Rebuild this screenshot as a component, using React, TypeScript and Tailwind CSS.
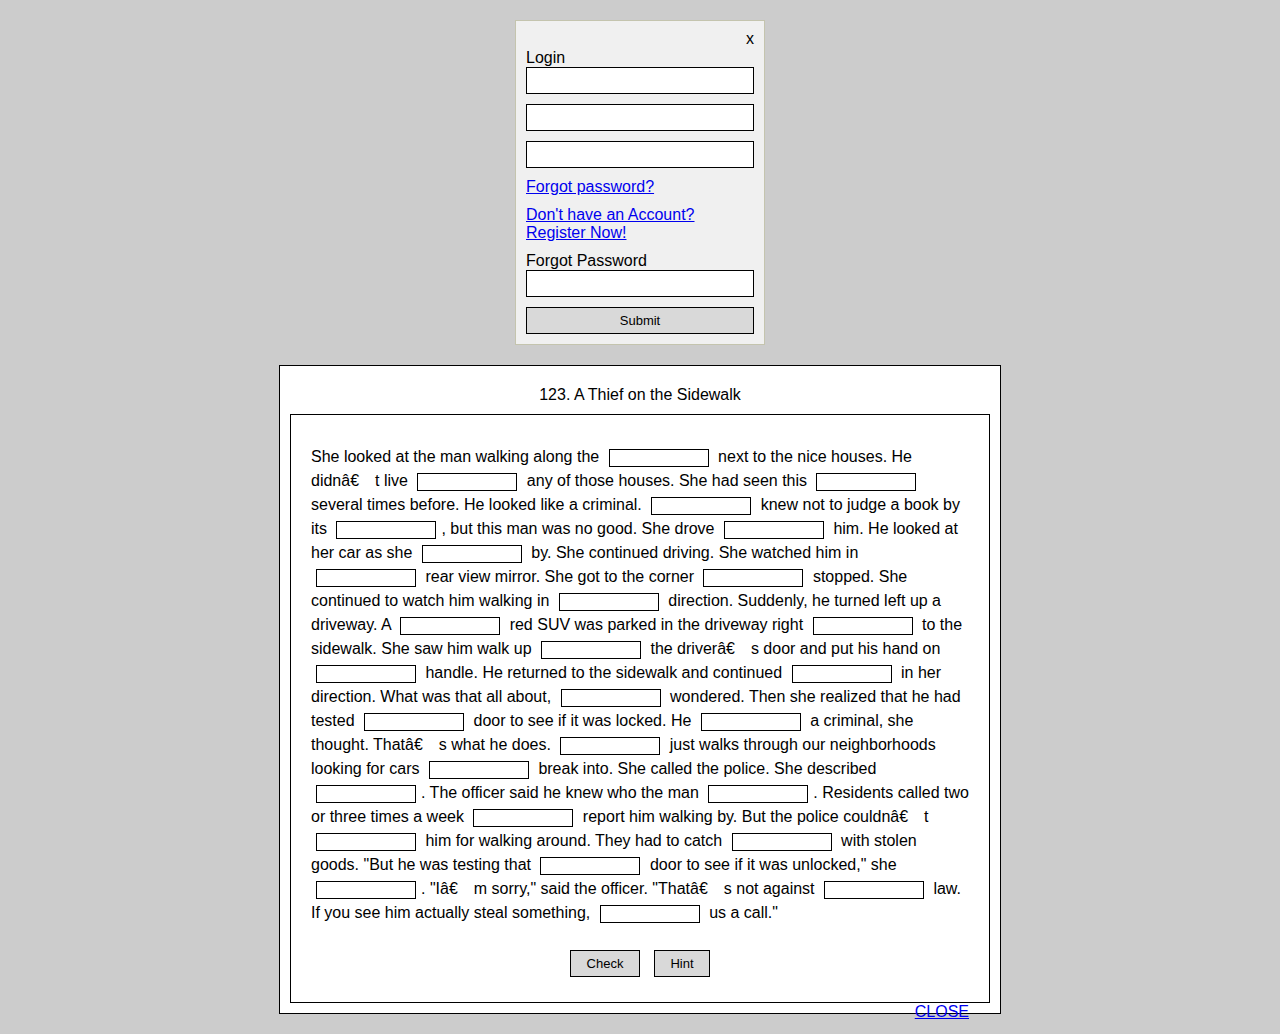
import React from 'react';

// "~" stands for the broken apostrophe (shown as "â€" plus a wide gap)
const story = `She looked at the man walking along the __ next to the nice houses. He didn~t live __ any of those houses. She had seen this __ several times before. He looked like a criminal. __ knew not to judge a book by its __, but this man was no good. She drove __ him. He looked at her car as she __ by. She continued driving. She watched him in __ rear view mirror. She got to the corner __ stopped. She continued to watch him walking in __ direction. Suddenly, he turned left up a driveway. A __ red SUV was parked in the driveway right __ to the sidewalk. She saw him walk up __ the driver~s door and put his hand on __ handle. He returned to the sidewalk and continued __ in her direction. What was that all about, __ wondered. Then she realized that he had tested __ door to see if it was locked. He __ a criminal, she thought. That~s what he does. __ just walks through our neighborhoods looking for cars __ break into. She called the police. She described __. The officer said he knew who the man __. Residents called two or three times a week __ report him walking by. But the police couldn~t __ him for walking around. They had to catch __ with stolen goods. "But he was testing that __ door to see if it was unlocked," she __. "I~m sorry," said the officer. "That~s not against __ law. If you see him actually steal something, __ us a call."`;

const Blank = () => (
  <input
    type="text"
    className="inline-block w-[100px] h-[18px] p-0 mx-[5px] align-middle border border-black bg-white outline-none"
  />
);

const Segment = ({ text }: { text: string }) => {
  const bits = text.split('~');
  return (
    <>
      {bits.map((bit, i) => (
        <React.Fragment key={i}>
          {bit}
          {i < bits.length - 1 && (
            <>
              â€<span className="pl-[16px]" />
            </>
          )}
        </React.Fragment>
      ))}
    </>
  );
};

const LoginBox = () => {
  const field = 'block w-full h-[27px] border border-black bg-white px-1';
  return (
    <div className="mx-auto mt-[20px] w-[250px] border border-[#c4c4ae] bg-[#f0f0f0] p-[10px] text-[16px] leading-[18px] text-black">
      <div className="text-right leading-[16px]">x</div>
      <div className="mt-[2px]">Login</div>
      <input type="text" className={field} />
      <input type="password" className={`${field} mt-[10px]`} />
      <input type="password" className={`${field} mt-[10px]`} />
      <a href="#" className="mt-[10px] block text-[#0000ee] underline">
        Forgot password?
      </a>
      <a href="#" className="mt-[10px] block text-[#0000ee] underline">
        Don't have an Account?
        <br />
        Register Now!
      </a>
      <div className="mt-[10px]">Forgot Password</div>
      <input type="text" className={field} />
      <button className="mt-[10px] block w-full h-[27px] border border-black bg-[#d9d9d9] text-[13px] leading-none">
        Submit
      </button>
    </div>
  );
};

export default function App() {
  const parts = story.split('__');

  return (
    <div className="min-h-[1034px] bg-[#cccccc] font-['Liberation_Sans',Arial,sans-serif] text-black overflow-hidden">
      <LoginBox />

      <div className="relative mx-auto mt-[20px] w-[722px] border border-black bg-white p-[10px]">
        <div className="h-[38px] flex items-center justify-center text-[16px]">
          123. A Thief on the Sidewalk
        </div>
        <div className="border border-black px-[20px] pt-[30px] pb-[25px]">
          <p className="text-[16px] leading-[24px]">
            {parts.map((text, i) => (
              <React.Fragment key={i}>
                <Segment text={text} />
                {i < parts.length - 1 && <Blank />}
              </React.Fragment>
            ))}
          </p>
          <div className="mt-[25px] flex justify-center gap-[14px]">
            <button className="w-[70px] h-[27px] border border-black bg-[#d9d9d9] text-[13px] leading-none">
              Check
            </button>
            <button className="w-[56px] h-[27px] border border-black bg-[#d9d9d9] text-[13px] leading-none">
              Hint
            </button>
          </div>
        </div>
        <a
          href="#"
          className="absolute right-[31px] bottom-[-8px] text-[16px] leading-[18px] text-[#0000ee] underline"
        >
          CLOSE
        </a>
      </div>
    </div>
  );
}
